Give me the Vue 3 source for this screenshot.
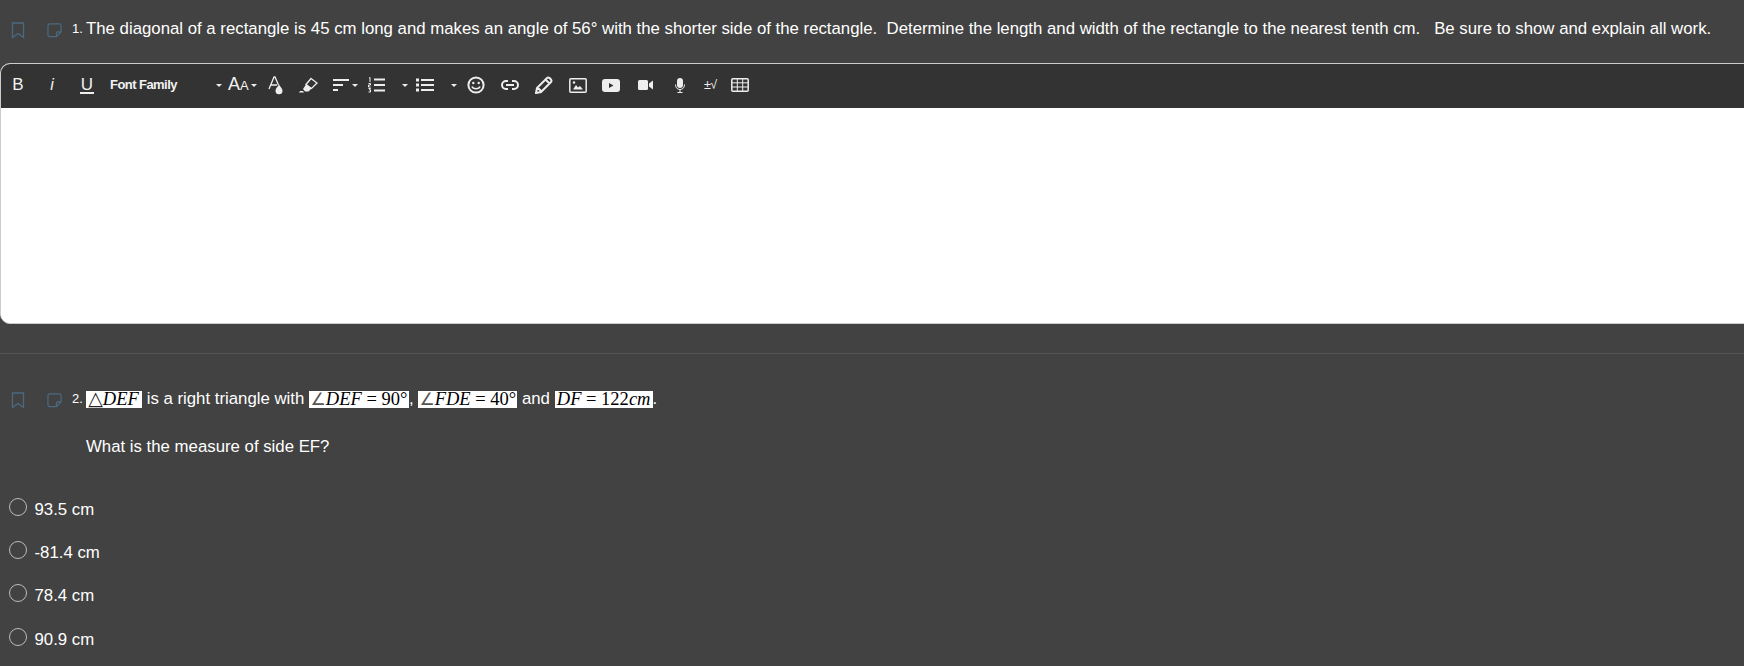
<script setup>
const options = ['93.5 cm', '-81.4 cm', '78.4 cm', '90.9 cm']
</script>

<template>
  <div class="page">
    <section class="q q1">
      <div class="qrow">
        <svg class="bm" width="14" height="17" viewBox="0 0 14 17"><path d="M1.5 1h11v14.5L7 11.5l-5.5 4z" /></svg>
        <svg class="note" width="15" height="15" viewBox="0 0 16 16"><path d="M10 14.500H3a2 2 0 0 1-2-2V3a2 2 0 0 1 2-2h10a2 2 0 0 1 2 2v6.500zM15 9.500h-3.500a1.500 1.500 0 0 0-1.500 1.500v3.500" /></svg>
        <span class="num">1.</span>
        <p class="qtext">The diagonal of a rectangle is 45 cm long and makes an angle of 56° with the shorter side of the rectangle.&nbsp; Determine the length and width of the rectangle to the nearest tenth cm.&nbsp;&nbsp; Be sure to show and explain all work.</p>
      </div>
      <div class="editor">
        <div class="toolbar">
          <span class="tb b">B</span>
          <span class="tb i">i</span>
          <span class="tb u"><span class="uline">U</span></span>
          <span class="ff">Font Family</span>
          <span class="caret c1"></span>
          <span class="aa">A<small>A</small></span>
          <span class="caret c2"></span>
          <svg class="ic m-a" width="16" height="20" viewBox="0 0 16 20"><path class="st" d="M1 14 6 2h1l3.500 8M3 10h6" /><path class="fl" d="M11 9.500c1.500 2.500 3.500 4 3.500 6.200a3.500 3.500 0 0 1-7 0c0-2.200 2-3.700 3.500-6.200z" /></svg>
          <svg class="ic m-e" width="19" height="18" viewBox="0 0 19 18"><path class="st" d="M12 2.500 18 7 12.500 12.500 7 8.500z" /><path class="fl" d="M7 8.500 12.500 12.500 9.500 15.500H6L4 13zM1 15h3l1 1.500H0z" /></svg>
          <svg class="ic m-al" width="17" height="14" viewBox="0 0 17 14"><path class="st2" d="M0 2h16M0 7h10M0 12h5" /></svg>
          <span class="caret c3"></span>
          <svg class="ic m-ol" width="18" height="16" viewBox="0 0 18 16"><path class="st2" d="M6 2.500h11M6 8h11M6 13.500h11" /><path class="st1" d="M1 1l1-.500V5M.5 6.500h2v1.500H.5V10h2.200M.5 11.500h2l-1 1.500h1v2H.5" /></svg>
          <span class="caret c4"></span>
          <svg class="ic m-ul" width="18" height="14" viewBox="0 0 18 14"><path class="st2" d="M5 2h13M5 7h13M5 12h13" /><path class="fl" d="M0 .500h3v3H0zM0 5.500h3v3H0zM0 10.500h3v3H0z" /></svg>
          <span class="caret c5"></span>
          <svg class="ic m-sm" width="18" height="18" viewBox="0 0 18 18"><circle class="st2" cx="9" cy="9" r="7.600" /><circle class="fl" cx="6.300" cy="7" r="1.200" /><circle class="fl" cx="11.700" cy="7" r="1.200" /><path class="st15" d="M5 10.500c1 3 7 3 8 0" /></svg>
          <svg class="ic m-ln" width="18" height="10" viewBox="0 0 18 10"><path class="st2" d="M7 1H5a4 4 0 0 0 0 8h2M11 1h2a4 4 0 0 1 0 8h-2M5 5h8" /></svg>
          <svg class="ic m-pn" width="18" height="18" viewBox="0 0 18 18"><path class="st2" d="M1 17l1-5L12 2a2 2 0 0 1 2.500 0l1.500 1.500a2 2 0 0 1 0 2.500L6 16zM10.500 3.500l4 4M3 12l3 3" /></svg>
          <svg class="ic m-im" width="18" height="15" viewBox="0 0 18 15"><rect class="st15" x=".8" y=".8" width="16.400" height="13.400" rx="1" /><path class="fl" d="M4 11.500 7 7l2 2.500 2-1.500 3 3.500z" /><circle class="fl" cx="5" cy="4.500" r="1.200" /></svg>
          <svg class="ic m-yt" width="18" height="13" viewBox="0 0 18 13"><rect class="fl" width="18" height="13" rx="3" /><path class="dk" d="M7 4v5l4.500-2.500z" /></svg>
          <svg class="ic m-vd" width="15" height="10" viewBox="0 0 15 10"><rect class="fl" width="10" height="10" rx="1.500" /><path class="fl" d="M11 3.500 15 .5v9l-4-3z" /></svg>
          <svg class="ic m-mc" width="10" height="15" viewBox="0 0 10 15"><rect class="fl" x="2" y="0" width="6" height="10" rx="3" /><path class="st1" d="M.5 6.500C.5 10 2.500 11.500 5 11.500S9.500 10 9.500 6.500M5 11.500V15M2.500 14.500h5" /></svg>
          <span class="pm">±√</span>
          <svg class="ic m-tb" width="18" height="14" viewBox="0 0 18 14"><rect class="st15" x=".8" y=".8" width="16.400" height="12.400" rx="1" /><path class="st1" d="M.8 4.800h16.400M.8 9h16.400M6.300.8v12.400M11.700.8v12.400" /></svg>
        </div>
        <div class="area"></div>
      </div>
    </section>

    <section class="q q2">
      <div class="qrow">
        <svg class="bm" width="14" height="17" viewBox="0 0 14 17"><path d="M1.5 1h11v14.5L7 11.500l-5.500 4z" /></svg>
        <svg class="note" width="15" height="15" viewBox="0 0 16 16"><path d="M10 14.500H3a2 2 0 0 1-2-2V3a2 2 0 0 1 2-2h10a2 2 0 0 1 2 2v6.500zM15 9.500h-3.500a1.500 1.500 0 0 0-1.500 1.500v3.500" /></svg>
        <span class="num">2.</span>
        <p class="qtext"><span class="math w56"><span class="sym tri">△</span><i>DEF</i></span> is a right triangle with <span class="math w100"><span class="sym">∠</span><i>DEF</i> = 90°</span>, <span class="math w99"><span class="sym">∠</span><i>FDE</i> = 40°</span> and <span class="math w98"><i>DF</i> = 122<i>cm</i></span>.</p>
      </div>
      <p class="follow">What is the measure of side EF?</p>
      <ul class="opts">
        <li v-for="o in options" :key="o" class="opt"><span class="radio"></span><span>{{ o }}</span></li>
      </ul>
    </section>
  </div>
</template>

<style>
html, body { margin: 0; background: #424242; overflow: hidden; }
</style>

<style scoped>
.page { width: 1744px; height: 666px; background: #424242; color: #fff; font: 16.8px/20px "Liberation Sans", Arial, sans-serif; overflow: hidden; }
p { margin: 0; }
.q1 { padding-top: 19px; height: 354px; box-sizing: border-box; border-bottom: 1px solid #555; }
.qrow { display: flex; align-items: center; height: 20px; white-space: nowrap; }
.bm { margin: 2px 0 0 11px; fill: none; stroke: #4a6a80; stroke-width: 1.300; }
.note { margin: 2px 0 0 22px; fill: none; stroke: #4a6a80; stroke-width: 1.300; }
.num { margin-left: 10px; width: 14px; font-size: 13px; }
.editor { margin-top: 24px; width: 1760px; height: 261px; box-sizing: border-box; border: 1px solid #ccc; border-radius: 10px; overflow: hidden; background: #fff; }
.toolbar { height: 44px; box-sizing: border-box; padding-bottom: 2px; background: #333; display: flex; align-items: center; color: #f2f2f2; }
.tb { width: 34px; text-align: center; font-size: 17px; flex: none; }
.i { font-style: italic; font-size: 16px; }
.uline { display: inline-block; border-bottom: 2px solid #eee; line-height: 15px; padding: 0 1px; }
.u { margin-left: 1px; }
.ff { width: 112px; flex: none; box-sizing: border-box; padding-left: 6px; font-size: 13px; font-weight: 700; letter-spacing: -.55px; }
.caret { width: 0; height: 0; border: 3px solid transparent; border-top: 3px solid #eee; border-bottom: 0; flex: none; }
.c1 { margin-left: 0; }
.aa { margin-left: 6px; width: 21px; font-size: 18px; flex: none; }
.aa small { font-size: 13px; }
.c2 { margin-left: 2px; }
.ic { flex: none; }
.st { fill: none; stroke: #eee; stroke-width: 1.300; }
.st1 { fill: none; stroke: #eee; stroke-width: 1; }
.st15 { fill: none; stroke: #eee; stroke-width: 1.500; }
.st2 { fill: none; stroke: #eee; stroke-width: 2; }
.fl { fill: #eee; }
.dk { fill: #333; }
.m-a { margin-left: 11px; }
.m-e { margin-left: 15px; }
.m-al { margin-left: 15px; }
.c3 { margin-left: 2px; }
.m-ol { margin-left: 10px; }
.c4 { margin-left: 16px; }
.m-ul { margin-left: 8px; }
.c5 { margin-left: 17px; }
.m-sm { margin-left: 10px; }
.m-ln { margin-left: 16px; }
.m-pn { margin-left: 16px; }
.m-im { margin-left: 16px; }
.m-yt { margin-left: 15px; }
.m-vd { margin-left: 18px; }
.m-mc { margin-left: 22px; }
.pm { margin-left: 19px; width: 17px; font-size: 12.500px; flex: none; letter-spacing: -.5px; }
.m-tb { margin-left: 10px; }
.area { height: 215px; background: #fff; }
.q2 { padding-top: 35px; }
.follow { margin: 28px 0 0 86px; }
.math { display: inline-block; height: 17px; line-height: 17px; background: #fff; color: #000; font-family: "Liberation Serif", "DejaVu Serif", serif; font-size: 18.500px; vertical-align: -1px; white-space: nowrap; text-align: center; }
.sym { font-family: "DejaVu Sans", sans-serif; font-size: 17px; line-height: 0; color: #555; }
.tri { font-size: 19px; color: #222; margin-left: -1px; }
.w56 { width: 56px; }
.w100 { width: 100px; }
.w99 { width: 99px; }
.w98 { width: 98px; }
.opts { list-style: none; margin: 31px 0 0; padding: 0; }
.opt { display: flex; align-items: center; height: 43.300px; padding-left: 9px; }
.radio { width: 18px; height: 18px; box-sizing: border-box; border: 1px solid #bbb; border-radius: 50%; margin: -6px 7.500px 0 0; flex: none; }
</style>
